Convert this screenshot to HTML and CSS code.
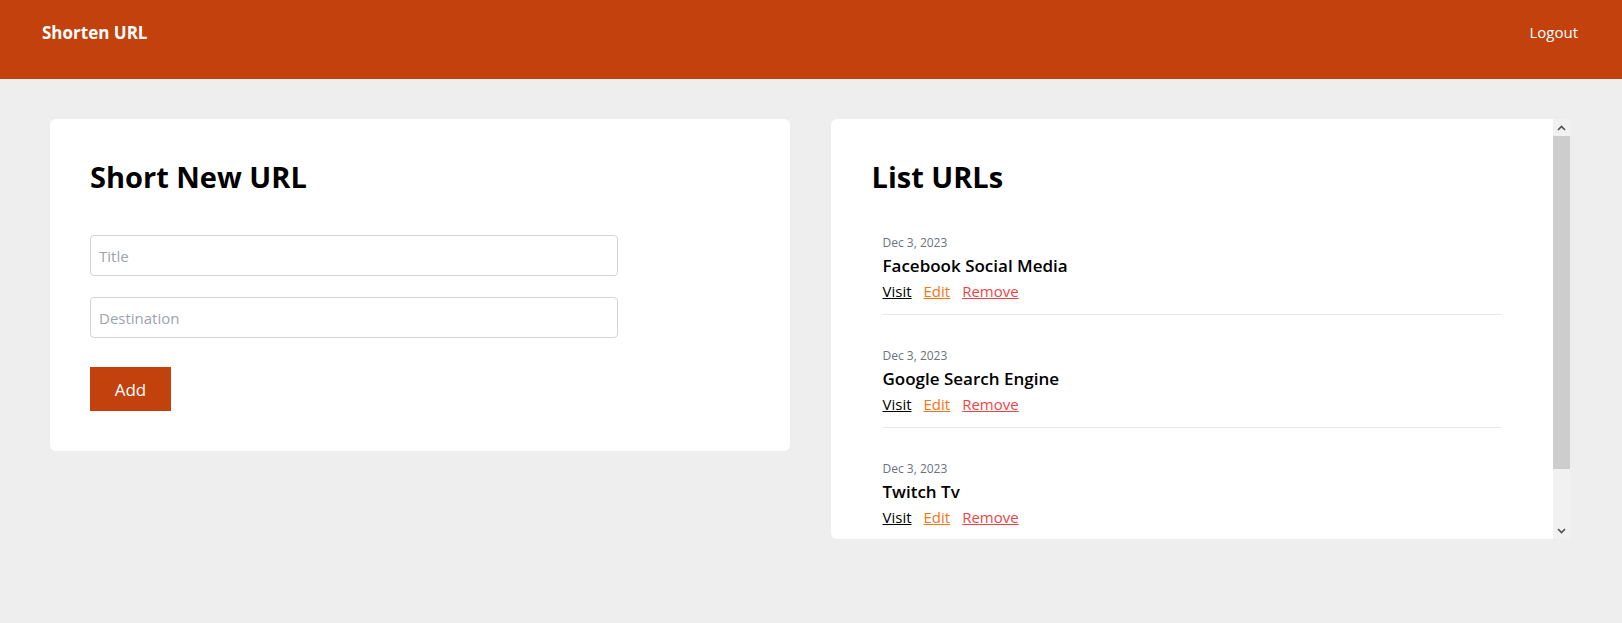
FILE: index.html
```html
<!DOCTYPE html>
<html lang="en">

<head>
    <meta charset="UTF-8">
    <meta name="viewport" content="width=device-width, initial-scale=1.0">
    <title>Shorten URL</title>
    <link rel="stylesheet" href="styles.css">
</head>

<body>
    <!-- Navbar -->
    <nav class="navbar">
        <a href="#" class="brand">Shorten URL</a>
        <a href="#" class="logout">Logout</a>
    </nav>

    <!-- Main Content -->
    <div class="main">
        <!-- Add URL Form -->
        <div class="card">
            <h2 class="card-title">Short New URL</h2>
            <form id="addUrlForm" class="url-form">
                <input type="text" id="title" name="title" placeholder="Title">
                <input type="text" id="destination" name="destination" placeholder="Destination">
                <button type="submit">Add</button>
            </form>
        </div>

        <!-- URL List -->
        <div class="card list-card">
            <div class="list-body">
                <h2 class="card-title list-title">List URLs</h2>
                <ul class="url-list">
                    <li>
                        <span class="url-date">Dec 3, 2023</span>
                        <h3 class="url-name">Facebook Social Media</h3>
                        <div class="url-actions">
                            <a href="#" class="visit">Visit</a>
                            <a href="#" class="edit">Edit</a>
                            <a href="#" class="remove">Remove</a>
                        </div>
                    </li>
                    <li>
                        <span class="url-date">Dec 3, 2023</span>
                        <h3 class="url-name">Google Search Engine</h3>
                        <div class="url-actions">
                            <a href="#" class="visit">Visit</a>
                            <a href="#" class="edit">Edit</a>
                            <a href="#" class="remove">Remove</a>
                        </div>
                    </li>
                    <li>
                        <span class="url-date">Dec 3, 2023</span>
                        <h3 class="url-name">Twitch Tv</h3>
                        <div class="url-actions">
                            <a href="#" class="visit">Visit</a>
                            <a href="#" class="edit">Edit</a>
                            <a href="#" class="remove">Remove</a>
                        </div>
                    </li>
                </ul>
            </div>
            <!-- scrollbar -->
            <div class="scrollbar">
                <div class="scroll-btn">
                    <svg width="9" height="6" viewBox="0 0 9 6"><polyline points="1,5 4.5,1.5 8,5" fill="none" stroke="#505050" stroke-width="1.6"/></svg>
                </div>
                <div class="scroll-thumb"></div>
                <div class="scroll-track"></div>
                <div class="scroll-btn">
                    <svg width="9" height="6" viewBox="0 0 9 6"><polyline points="1,1 4.5,4.5 8,1" fill="none" stroke="#505050" stroke-width="1.6"/></svg>
                </div>
            </div>
        </div>
    </div>
</body>

</html>
```

FILE: styles.css
```css
body {
    margin: 0;
    font-family: "Open Sans", Arial, sans-serif;
    background-color: #eeeeee;
    color: #000;
}

.navbar {
    background-color: #c2410c;
    height: 79px;
    box-sizing: border-box;
    padding: 21px 44px 0 42px;
    display: flex;
    align-items: flex-start;
    justify-content: space-between;
}

.navbar a {
    color: white;
    text-decoration: none;
}

.brand {
    font-size: 17px;
    font-weight: bold;
}

.logout {
    font-size: 15px;
    margin-top: 1px;
}

.main {
    display: grid;
    grid-template-columns: 1fr 1fr;
    gap: 41px;
    padding: 40px 52px 0 50px;
    align-items: start;
}

.card {
    background-color: #fff;
    border-radius: 6px;
    padding: 40px;
}

.card-title {
    font-size: 29px;
    line-height: 36px;
    font-weight: bold;
    margin: 0 0 40px;
}

.url-form input {
    display: block;
    box-sizing: border-box;
    width: 80%;
    height: 41px;
    padding: 0 8px;
    margin-bottom: 21px;
    border: 1px solid #d1d5db;
    border-radius: 4px;
    font-family: inherit;
    font-size: 15px;
}

.url-form input::placeholder {
    color: #9ca3af;
}

.url-form button {
    margin-top: 8px;
    width: 81px;
    height: 44px;
    background-color: #c2410c;
    color: white;
    border: none;
    font-family: inherit;
    font-size: 17px;
    cursor: pointer;
}

.list-card {
    height: 420px;
    padding: 0;
    display: flex;
    overflow: hidden;
    border-radius: 6px 0 0 6px;
}

.list-body {
    flex: 1;
    padding: 40px 41px 0;
}

.list-title {
    margin-bottom: 7px;
}

.url-list {
    list-style: none;
    margin: 0;
    padding: 0 11px;
}

.url-list li {
    padding: 32px 0 11px;
    border-bottom: 1px solid #e5e7eb;
}

.url-list li:last-child {
    border-bottom: none;
}

.url-date {
    display: block;
    font-size: 12px;
    line-height: 18px;
    color: #6b7280;
}

.url-name {
    margin: 0;
    font-size: 17px;
    line-height: 27px;
    font-weight: 600;
}

.url-actions {
    display: flex;
    gap: 12px;
    font-size: 15px;
    line-height: 24px;
}

.url-actions a {
    text-decoration: underline;
}

.visit {
    color: #000;
}

.edit {
    color: #f97316;
}

.remove {
    color: #ef4444;
}

/* fake scrollbar */
.scrollbar {
    width: 17px;
    display: flex;
    flex-direction: column;
    background-color: #f1f1f1;
}

.scroll-btn {
    height: 17px;
    display: flex;
    align-items: center;
    justify-content: center;
}

.scroll-thumb {
    height: 333px;
    background-color: #cdcdcd;
}

.scroll-track {
    flex: 1;
}
```
